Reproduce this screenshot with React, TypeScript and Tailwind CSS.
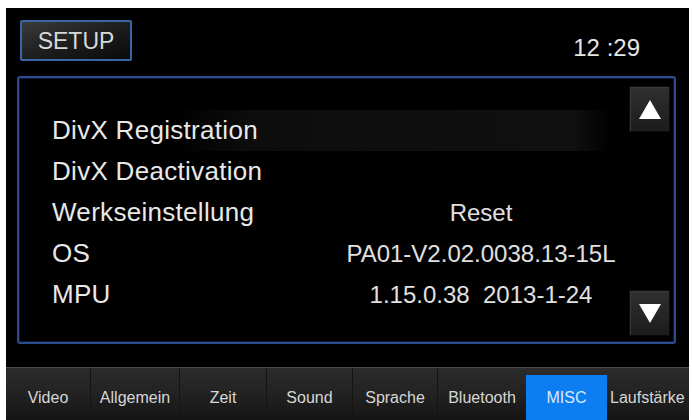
import { ReactNode } from 'react';

const ROWS: { label: string; value?: string }[] = [
  { label: 'DivX Registration' },
  { label: 'DivX Deactivation' },
  { label: 'Werkseinstellung', value: 'Reset' },
  { label: 'OS', value: 'PA01-V2.02.0038.13-15L' },
  { label: 'MPU', value: '1.15.0.38  2013-1-24' },
];

const TABS: { name: string; w: string; active?: boolean }[] = [
  { name: 'Video', w: 'w-[85px]' },
  { name: 'Allgemein', w: 'w-[89px]' },
  { name: 'Zeit', w: 'w-[87px]' },
  { name: 'Sound', w: 'w-[86px]' },
  { name: 'Sprache', w: 'w-[85px]' },
  { name: 'Bluetooth', w: 'w-[88px]' },
  { name: 'MISC', w: 'w-[81px]', active: true },
  { name: 'Laufstärke', w: 'w-[90px]' },
];

function ArrowButton({ children }: { children: ReactNode }) {
  return (
    <div className="w-[41px] h-[46px] flex items-center justify-center bg-gradient-to-b from-[#303030] to-[#1c1c1c] border border-[#0c0c0c] shadow-[inset_1px_1px_0_#3a3a3a]">
      {children}
    </div>
  );
}

export default function App() {
  return (
    <div
      className="w-[692px] h-[420px] bg-white pt-[8px] pl-[6px] pr-[3px] overflow-hidden"
      style={{ fontFamily: '"Liberation Sans", Arial, sans-serif' }}
    >
      <div className="h-full bg-black flex flex-col">
        {/* header */}
        <div className="h-[68px] flex items-start justify-between pl-[14px] pr-[49px] pt-[12px]">
          <div className="w-[112px] h-[41px] flex items-center justify-center rounded-[2px] border-2 border-[#3a66a8] bg-gradient-to-br from-[#3c3c3c] via-[#1e1e1e] to-[#0a0a0a] text-[23px] text-[#d8d8d8] leading-none pt-[1px]">
            SETUP
          </div>
          <div className="mt-[16px] text-[24px] leading-none text-[#e6e6e6]">12 :29</div>
        </div>

        {/* panel */}
        <div className="ml-[11px] mr-[13px] h-[268px] flex rounded-[3px] border-2 border-[#2e4c8e] shadow-[inset_0_0_0_1px_#101a33] bg-black">
          <div className="flex-1 pl-[33px] pt-[32px]">
            {ROWS.map((row, i) => (
              <div
                key={row.label}
                className={
                  'h-[41px] w-[574px] grid grid-cols-[284px_290px] items-center ' +
                  (i === 0
                    ? 'bg-[linear-gradient(90deg,transparent_120px,#0d0d0d_200px,#101010_520px,transparent_560px)]'
                    : '')
                }
              >
                <span className="text-[26px] leading-[41px] tracking-[0.3px] text-[#e8e8e8] whitespace-nowrap">
                  {row.label}
                </span>
                <span className="text-[24px] leading-[41px] text-[#e0e0e0] text-center whitespace-pre">
                  {row.value ?? ''}
                </span>
              </div>
            ))}
          </div>
          <div className="flex flex-col justify-between pt-[8px] pb-[6px] pr-[4px]">
            <ArrowButton>
              <svg width="24" height="21" viewBox="0 0 24 21">
                <polygon points="12,1 23,20 1,20" fill="#ffffff" />
              </svg>
            </ArrowButton>
            <ArrowButton>
              <svg width="24" height="21" viewBox="0 0 24 21">
                <polygon points="1,1 23,1 12,20" fill="#ffffff" />
              </svg>
            </ArrowButton>
          </div>
        </div>

        <div className="h-[23px]" />

        {/* tab bar */}
        <div className="flex-1 flex overflow-hidden border-t border-[#4a4a4a] bg-gradient-to-b from-[#2c2c2c] via-[#222222] to-[#151515]">
          {TABS.map((tab, i) => (
            <div
              key={tab.name}
              className={
                tab.w +
                ' shrink-0 flex items-end pb-[14px] text-[16px] leading-none whitespace-nowrap ' +
                (i < TABS.length - 1 && !tab.active && !TABS[i + 1].active ? 'border-r border-[#141414] ' : '') +
                (tab.active
                  ? 'bg-[#0c7ef2] mt-[7px] justify-center text-[#dbe9ff]'
                  : i === TABS.length - 1
                    ? 'pl-[3px] text-[#d6d6d6]'
                    : 'justify-center text-[#d6d6d6]')
              }
            >
              {tab.name}
            </div>
          ))}
        </div>
      </div>
    </div>
  );
}
